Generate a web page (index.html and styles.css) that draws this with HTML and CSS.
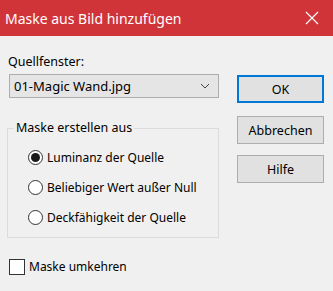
FILE: index.html
```html
<!DOCTYPE html>
<html lang="de">
<head>
    <meta charset="UTF-8">
    <title>Maske aus Bild hinzufügen</title>
    <link rel="stylesheet" href="styles.css">
</head>
<body>
    <div class="dialog">
        <div class="titlebar">
            <span class="title">Maske aus Bild hinzufügen</span>
            <svg class="close" width="14" height="14" viewBox="0 0 14 14">
                <path d="M1 1 L13 13 M13 1 L1 13" stroke="#fff" stroke-width="1.2" fill="none"/>
            </svg>
        </div>
        <div class="content">
            <div class="left">
                <div class="label">Quellfenster:</div>
                <div class="combo">
                    <span>01-Magic Wand.jpg</span>
                    <svg class="chevron" width="10" height="6" viewBox="0 0 10 6">
                        <path d="M1 1 L5 5 L9 1" stroke="#444" stroke-width="1" fill="none"/>
                    </svg>
                </div>
                <fieldset class="group">
                    <legend>Maske erstellen aus</legend>
                    <label class="option"><span class="radio checked"></span>Luminanz der Quelle</label>
                    <label class="option"><span class="radio"></span>Beliebiger Wert außer Null</label>
                    <label class="option"><span class="radio"></span>Deckfähigkeit der Quelle</label>
                </fieldset>
                <label class="check-row"><span class="checkbox"></span>Maske umkehren</label>
            </div>
            <div class="right">
                <button class="btn default">OK</button>
                <button class="btn">Abbrechen</button>
                <button class="btn">Hilfe</button>
            </div>
        </div>
    </div>
</body>
</html>
```

FILE: styles.css
```css
body {
    margin: 0;
    background-color: #f0f0f0;
    font-family: "Noto Sans", sans-serif;
    font-size: 12px;
    color: #000;
}

.dialog {
    width: 333px;
    height: 291px;
    overflow: hidden;
}

.titlebar {
    height: 36px;
    background-color: #d13438;
    display: flex;
    align-items: center;
    justify-content: space-between;
    padding: 0 14px 0 5px;
    box-sizing: border-box;
}

.title {
    color: #fff;
    font-size: 14px;
}

.close {
    display: block;
}

.content {
    display: flex;
    padding-left: 7px;
}

.left {
    width: 212px;
}

.label {
    margin-top: 18px;
    padding-left: 1px;
    line-height: 16px;
    font-size: 12.5px;
}

.combo {
    margin: 4px 0 0 2px;
    height: 24px;
    box-sizing: border-box;
    border: 1px solid #adadad;
    background-color: #e5e5e5;
    display: flex;
    align-items: center;
    justify-content: space-between;
    padding: 0 8px 0 4px;
    font-size: 13px;
}

.group {
    margin: 22px 0 0 0;
    padding: 6px 0 5px 20px;
    border: 1px solid #dcdcdc;
    min-width: 0;
}

.group legend {
    padding: 0 2px;
    margin-left: -14px;
    line-height: 16px;
    font-size: 12.5px;
}

.option {
    display: flex;
    align-items: center;
    height: 30px;
}

.radio {
    width: 15px;
    height: 15px;
    box-sizing: border-box;
    border: 1px solid #333;
    border-radius: 50%;
    background: #fff;
    margin-right: 4px;
    display: flex;
    align-items: center;
    justify-content: center;
}

.radio.checked::after {
    content: "";
    width: 9px;
    height: 9px;
    border-radius: 50%;
    background: #1a1a1a;
}

.check-row {
    display: flex;
    align-items: center;
    margin-top: 21px;
    padding-left: 2px;
    line-height: 16px;
}

.checkbox {
    width: 16px;
    height: 16px;
    box-sizing: border-box;
    border: 1px solid #333;
    background: #fff;
    margin-right: 4px;
}

.right {
    margin-left: 18px;
    padding-top: 39px;
    display: flex;
    flex-direction: column;
}

.btn {
    width: 87px;
    height: 28px;
    margin-bottom: 11px;
    box-sizing: border-box;
    border: 1px solid #adadad;
    background-color: #e1e1e1;
    font-family: inherit;
    font-size: 12.5px;
    color: #000;
    padding: 0;
}

.btn.default {
    border: 2px solid #0078d7;
    margin-bottom: 13px;
}
```
